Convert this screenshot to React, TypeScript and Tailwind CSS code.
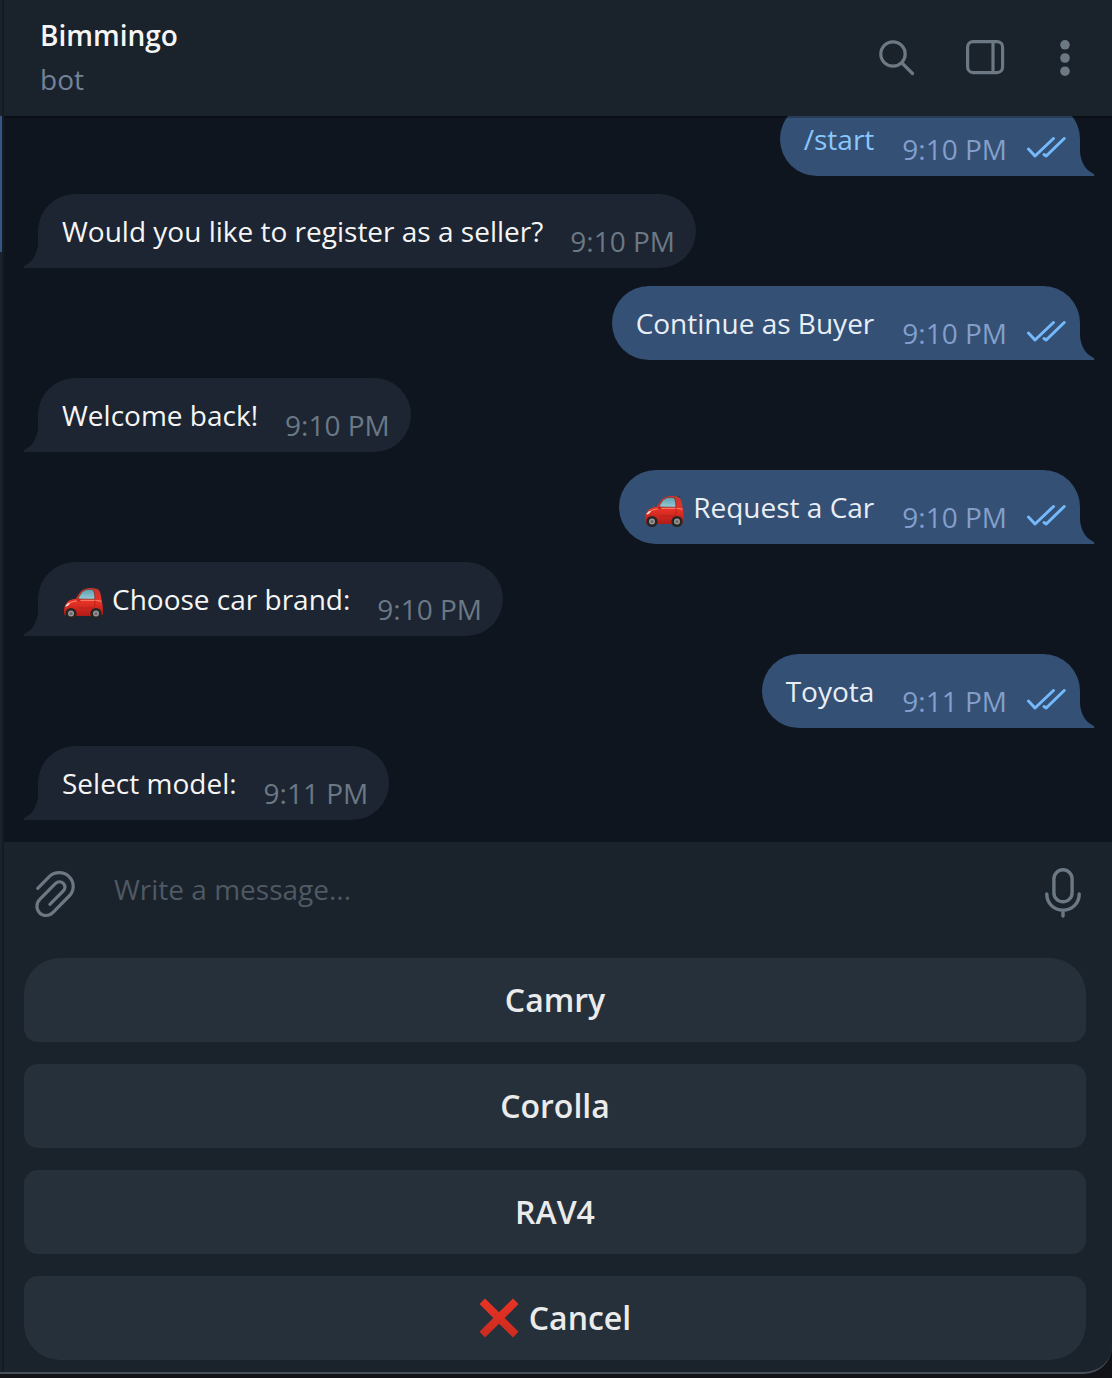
import clsx from "clsx";
import type { ReactNode } from "react";

type Message = {
  id: number;
  text: string;
  time: string;
  out?: boolean;
  car?: boolean;
  command?: boolean;
};

const messages: Message[] = [
  { id: 1, text: "/start", time: "9:10 PM", out: true, command: true },
  { id: 2, text: "Would you like to register as a seller?", time: "9:10 PM" },
  { id: 3, text: "Continue as Buyer", time: "9:10 PM", out: true },
  { id: 4, text: "Welcome back!", time: "9:10 PM" },
  { id: 5, text: "Request a Car", time: "9:10 PM", out: true, car: true },
  { id: 6, text: "Choose car brand:", time: "9:10 PM", car: true },
  { id: 7, text: "Toyota", time: "9:11 PM", out: true },
  { id: 8, text: "Select model:", time: "9:11 PM" },
];

function SearchIcon() {
  return (
    <svg width="40" height="40" viewBox="0 0 40 40" fill="none" stroke="currentColor" strokeWidth="3.2" strokeLinecap="round">
      <circle cx="16" cy="16" r="12.2" />
      <path d="M25 25l10.5 10.5" />
    </svg>
  );
}

function PanelIcon() {
  return (
    <svg width="40" height="36" viewBox="0 0 40 36" fill="none" stroke="currentColor" strokeWidth="3.2">
      <rect x="2.6" y="1.6" width="35" height="31" rx="5.5" />
      <path d="M28 2v30" />
    </svg>
  );
}

function DotsIcon() {
  return (
    <svg width="12" height="36" viewBox="0 0 12 36" fill="currentColor">
      <circle cx="6" cy="4.8" r="4.8" />
      <circle cx="6" cy="18" r="4.8" />
      <circle cx="6" cy="31.2" r="4.8" />
    </svg>
  );
}

function ClipIcon() {
  return (
    <svg width="42" height="48" viewBox="0 0 42 48" fill="none" stroke="currentColor" strokeWidth="3.2" strokeLinecap="round">
      <path d="M3.7 18.400L15.500 6.400C21 1.400 29.500 1.400 34.800 6.400c5.800 5.600 5.800 14.200.4 19.600L18.800 42.600c-3.800 3.800-9.600 3.800-13.200.2-3.600-3.600-3.600-9.600.2-13.400L21.300 13.600c2.400-2.400 5.800-2.400 8-.2 2.200 2.200 2.200 5.400-.2 7.800L15.900 34.400" />
    </svg>
  );
}

function MicIcon() {
  return (
    <svg width="40" height="52" viewBox="0 0 40 52" fill="none" stroke="currentColor" strokeWidth="3.4" strokeLinecap="round">
      <rect x="10.9" y="3.8" width="18.2" height="32" rx="9.1" />
      <path d="M3.800 28c0 9.400 7.200 16.200 16.200 16.200S36.200 37.400 36.200 28M20 44.500v5.500" />
    </svg>
  );
}

function ChecksIcon() {
  return (
    <svg width="40" height="22" viewBox="0 0 40 22" fill="none" stroke="currentColor" strokeWidth="3" strokeLinecap="round" strokeLinejoin="round">
      <path d="M2.500 13l6.500 7L27.500 2.500" />
      <path d="M18 18.500l2.200 1.500L38.200 2.500" />
    </svg>
  );
}

function CarIcon() {
  return (
    <svg width="42" height="34" viewBox="0 0 42 34" className="shrink-0">
      <defs>
        <linearGradient id="carBody" x1="0" y1="0" x2="0" y2="1">
          <stop offset="0" stopColor="#c9362c" />
          <stop offset=".5" stopColor="#e63126" />
          <stop offset="1" stopColor="#b01b16" />
        </linearGradient>
        <linearGradient id="carGlass" x1="0" y1="0" x2="0" y2="1">
          <stop offset="0" stopColor="#5f9fb0" />
          <stop offset="1" stopColor="#93ccd6" />
        </linearGradient>
      </defs>
      <path d="M36 4V1" stroke="#333" strokeWidth="1" />
      <path d="M2 24c0-3 .8-5 2-7 2-3.500 5-4.800 10-5.200C17 6 20 2 24.500 1.400c5-.7 8.500-.4 11.500 1.200 2.500 1.600 3 6 3.800 11.400 1 4 1.400 9 1 13.500L38 29H4c-2-1-2-2-2-5z" fill="url(#carBody)" />
      <path d="M16 12c2-5 4.800-8.800 8.700-9.400 2.500-.4 5-.3 6.500.2 1.500 2.500 1.800 6 1.600 9.500z" fill="url(#carGlass)" stroke="#842018" strokeWidth=".7" />
      <path d="M5 17.500c6-4.500 15-4.300 22-4.200 6 0 9.500.2 12.500 1" stroke="#ff8a73" strokeWidth="1" fill="none" />
      <path d="M17 21h14M32.800 13c.8 4 .2 7-1.800 9" stroke="#ad2119" strokeWidth=".8" fill="none" />
      <path d="M3.500 18.500c2-2.500 4-3 4.500-2.300-.5 1.500-2 3-4.800 3.400z" fill="#e9dcd6" />
      <ellipse cx="16.500" cy="13" rx="2" ry="1.500" fill="#c3261d" />
      {[9, 34].map((cx) => (
        <g key={cx}>
          <circle cx={cx} cy="26.500" r="5.600" fill="#252523" />
          <circle cx={cx} cy="26.500" r="3" fill="#9a9997" />
          <circle cx={cx} cy="26.500" r="1.600" fill="#6c6b69" />
        </g>
      ))}
    </svg>
  );
}

function CrossIcon() {
  return (
    <svg width="40" height="40" viewBox="0 0 40 40">
      <defs>
        <linearGradient id="cross" x1="0" y1="0" x2="0" y2="1">
          <stop offset="0" stopColor="#ea3324" />
          <stop offset="1" stopColor="#c92b20" />
        </linearGradient>
      </defs>
      <path d="M6 .5L20 14.300 34 .5 39.500 6 25.700 20l13.800 13.800-5.500 5.700L20 25.700 6 39.500.5 33.800 14.300 20 .5 6z" fill="url(#cross)" />
    </svg>
  );
}

function Bubble({ message }: { message: Message }) {
  const { text, time, out, car, command } = message;

  return (
    <li
      className={clsx(
        "relative flex h-[74px] shrink-0 items-start rounded-[37px] pl-6 pt-4",
        out
          ? "gap-7 self-end rounded-br-none bg-[#345075] pr-3.5 text-[#e9eef5]"
          : "gap-[27px] self-start rounded-bl-none bg-[#1c2531] pr-[21px] text-[#f5f5f5]"
      )}
    >
      <div className="flex h-11 items-center gap-2 whitespace-nowrap">
        {car && (
          <span className="pt-2" role="img" aria-label="car">
            <CarIcon />
          </span>
        )}
        {command ? (
          <a href="#start" className="pb-0.5 text-[#8ac7fc]">{text}</a>
        ) : (
          <span className="pb-0.5">{text}</span>
        )}
      </div>
      <div className={clsx("flex h-11 items-center gap-[19px] whitespace-nowrap pt-[18px]", out ? "text-[#829fcb]" : "text-[#6b7885]")}>
        <time>{time}</time>
        {out && <span className="pb-1 text-[#75b9fa]"><ChecksIcon /></span>}
      </div>
      <svg
        width="14"
        height="24"
        viewBox="0 0 14 24"
        className={clsx("absolute bottom-0", out ? "left-full text-[#345075]" : "right-full -scale-x-100 text-[#1c2531]")}
      >
        <path d="M0 0c1 10 5 18 14 22v2H0z" fill="currentColor" />
      </svg>
    </li>
  );
}

function KeyboardButton({ children, className }: { children: ReactNode; className?: string }) {
  return (
    <button
      type="button"
      className={clsx("flex h-[84px] w-full items-center justify-center gap-2.5 rounded-[14px] bg-[#26303b] text-[32px] font-semibold text-[#ebebeb]", className)}
    >
      {children}
    </button>
  );
}

export default function App() {
  return (
    <div className="flex h-screen flex-col bg-[#121316] pb-1 font-['Open_Sans','Noto_Sans',sans-serif] text-[28px] leading-10">
      <div className="flex min-h-0 flex-1 overflow-hidden rounded-br-[28px] border-b-2 border-[#48505a] bg-[#1a222b]">
        <div className="w-0.5 shrink-0 pt-[116px]">
          <div className="h-[136px] bg-[#345685]" />
        </div>
        <main className="flex min-w-0 flex-1 flex-col border-l-2 border-[#141b23]">
          <header className="z-10 flex h-[116px] shrink-0 items-center justify-between pl-9 pr-[41px] shadow-[0_2px_0_rgba(0,0,0,0.25)]">
            <div className="pb-0.5">
              <h1 className="pb-1 font-semibold text-[#f5f5f5]">Bimmingo</h1>
              <p className="text-[#73829a]">bot</p>
            </div>
            <div className="flex items-center gap-12 text-[#6c7883]">
              <button type="button" aria-label="Search"><SearchIcon /></button>
              <button type="button" aria-label="Toggle side panel"><PanelIcon /></button>
              <button type="button" aria-label="More" className="pl-1.5"><DotsIcon /></button>
            </div>
          </header>

          <ul className="flex min-h-0 flex-1 flex-col justify-end gap-[18px] overflow-hidden bg-[#0e151e] pb-[22px] pl-[34px] pr-8">
            {messages.map((message) => (
              <Bubble key={message.id} message={message} />
            ))}
          </ul>

          <form className="flex h-[116px] shrink-0 items-start pl-[30px] pr-[29px] pt-6 text-[#6c7883]">
            <button type="button" aria-label="Attach file" className="pt-1"><ClipIcon /></button>
            <input
              type="text"
              aria-label="Message"
              placeholder="Write a message..."
              className="ml-[38px] h-[46px] min-w-0 flex-1 bg-transparent text-[#f5f5f5] outline-none placeholder:text-[#4e5964]"
            />
            <button type="button" aria-label="Record voice message"><MicIcon /></button>
          </form>

          <div className="flex shrink-0 flex-col gap-[22px] pb-3 pl-5 pr-[26px]">
            <KeyboardButton className="rounded-t-[36px]">Camry</KeyboardButton>
            <KeyboardButton>Corolla</KeyboardButton>
            <KeyboardButton>RAV4</KeyboardButton>
            <KeyboardButton className="rounded-b-[36px]">
              <CrossIcon />
              Cancel
            </KeyboardButton>
          </div>
        </main>
      </div>
    </div>
  );
}
